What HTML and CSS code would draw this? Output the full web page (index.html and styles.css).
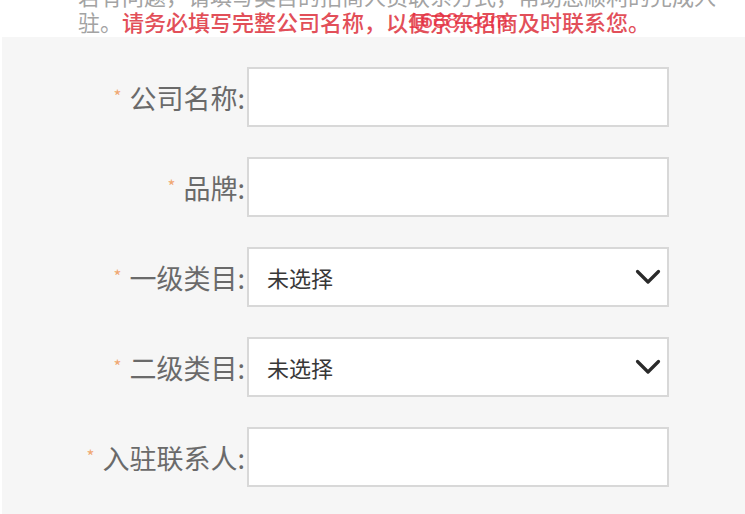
FILE: index.html
```html
<!DOCTYPE html>
<html lang="zh-CN">
<head>
<meta charset="utf-8">
<link rel="stylesheet" href="styles.css">
</head>
<body>
<div class="notice">
  <p class="notice-text">若有问题，请填写类目的招商人员联系方式，帮助您顺利的完成入<br>驻。<span class="warn">请务必填写完整公司名称，以便京东招商及时联系您。</span></p>
  <span class="watermark">1688.com</span>
</div>
<form class="panel">
  <div class="row">
    <label class="label"><span class="req">*</span>公司名称:</label>
    <div class="field"></div>
  </div>
  <div class="row">
    <label class="label"><span class="req">*</span>品牌:</label>
    <div class="field"></div>
  </div>
  <div class="row">
    <label class="label"><span class="req">*</span>一级类目:</label>
    <div class="field select"><span class="placeholder">未选择</span>
      <svg class="chev" width="26" height="16" viewBox="0 0 26 16"><path d="M2.5 2.5 L13 13 L23.5 2.5" fill="none" stroke="#2a2a2a" stroke-width="3.2" stroke-linecap="round" stroke-linejoin="round"/></svg>
    </div>
  </div>
  <div class="row">
    <label class="label"><span class="req">*</span>二级类目:</label>
    <div class="field select"><span class="placeholder">未选择</span>
      <svg class="chev" width="26" height="16" viewBox="0 0 26 16"><path d="M2.5 2.5 L13 13 L23.5 2.5" fill="none" stroke="#2a2a2a" stroke-width="3.2" stroke-linecap="round" stroke-linejoin="round"/></svg>
    </div>
  </div>
  <div class="row">
    <label class="label"><span class="req">*</span>入驻联系人:</label>
    <div class="field"></div>
  </div>
</form>
</body>
</html>
```
FILE: styles.css
```css
html, body {
  margin: 0;
  padding: 0;
  background: #ffffff;
  overflow: hidden;
}
body {
  font-family: "Noto Sans CJK SC", "Noto Sans", sans-serif;
  width: 745px;
  height: 514px;
}
.notice {
  position: relative;
  margin-top: -18px;
  padding-left: 78px;
  height: 55px;
}
.notice-text {
  margin: 0;
  font-size: 22px;
  line-height: 26px;
  color: #a3a3a3;
  white-space: nowrap;
}
.warn {
  color: #e24f59;
  font-weight: 500;
}
.watermark {
  position: absolute;
  left: 408px;
  top: 26px;
  font-family: "Liberation Sans", sans-serif;
  font-size: 22px;
  line-height: 26px;
  color: rgba(232, 40, 60, 0.8);
  letter-spacing: 0.5px;
}
.panel {
  margin: 0 0 0 2px;
  background: #f6f6f6;
  padding: 30px 0 40px;
  display: flex;
  flex-direction: column;
  gap: 30px;
  height: 477px;
  box-sizing: border-box;
}
.row {
  display: grid;
  grid-template-columns: 243px 422px;
  column-gap: 2px;
  height: 60px;
}
.label {
  align-self: center;
  text-align: right;
  font-size: 27px;
  line-height: 30px;
  color: #6a6a6a;
  white-space: nowrap;
}
.req {
  color: #f0a873;
  font-size: 17px;
  vertical-align: 6px;
  margin-right: 8px;
}
.field {
  background: #ffffff;
  border: 2px solid #d8d8d8;
  box-sizing: border-box;
  height: 60px;
}
.select {
  display: flex;
  align-items: center;
  justify-content: space-between;
  padding: 0 6px 0 18px;
}
.placeholder {
  font-size: 22px;
  color: #383838;
}
.chev {
  display: block;
}
```
